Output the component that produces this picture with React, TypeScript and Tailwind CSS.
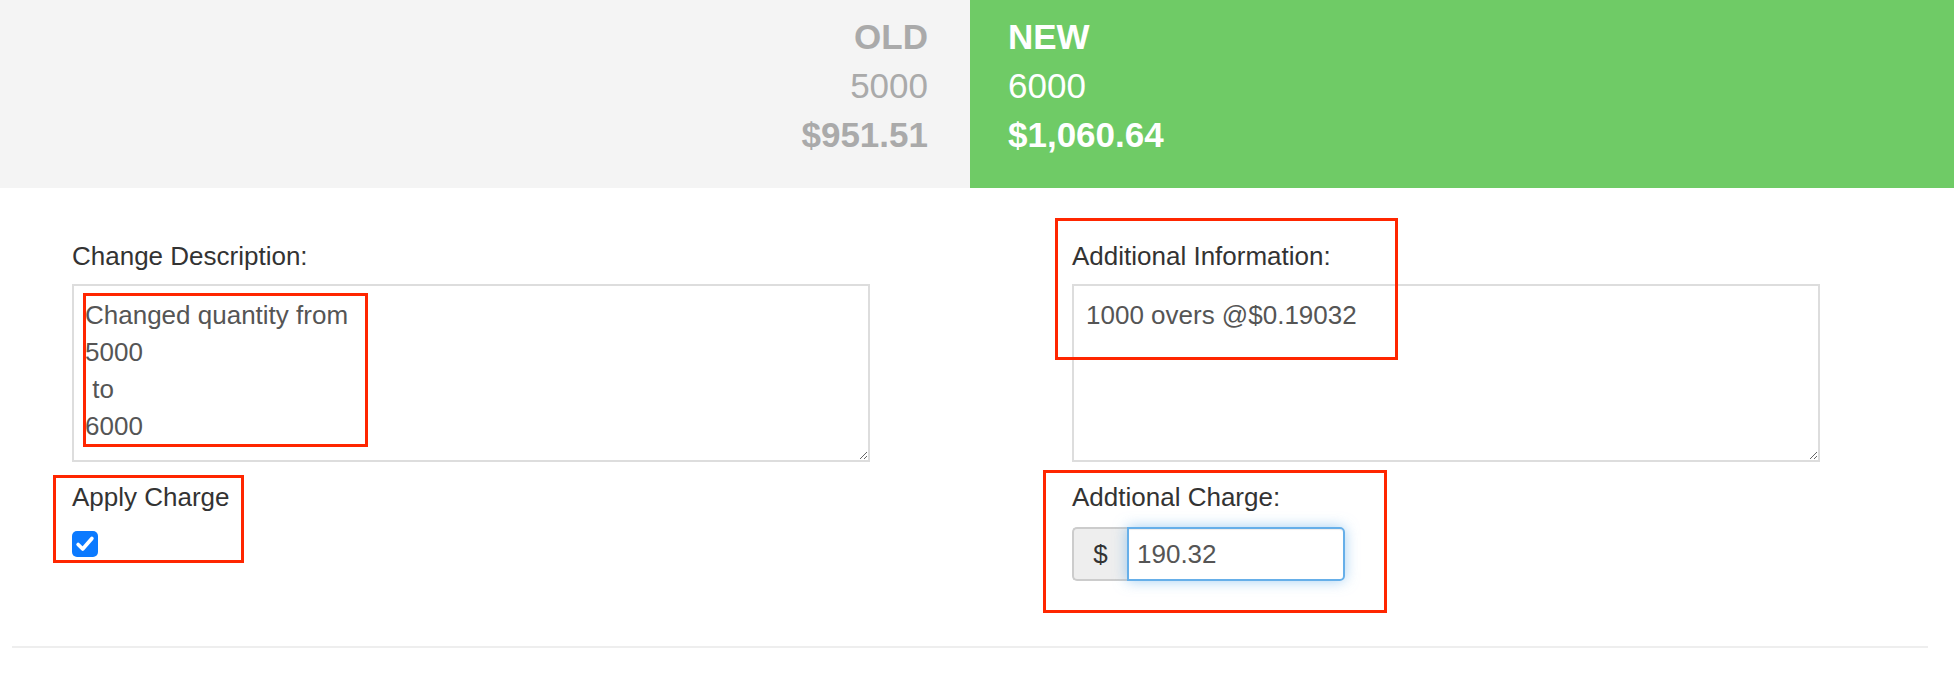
import type { ReactNode } from 'react'

function Label({ children, className = '' }: { children: ReactNode; className?: string }) {
  return <label className={`block text-[#333333] ${className}`}>{children}</label>
}

function CheckedBox() {
  return (
    <span className="mt-[15px] flex h-[26px] w-[26px] items-center justify-center rounded-[5px] bg-[#0b7aff]">
      <svg viewBox="0 0 24 24" className="h-[22px] w-[22px]" fill="none">
        <path
          d="M4.5 12.5l5 5L19.5 6"
          stroke="white"
          strokeWidth="4"
          strokeLinecap="round"
          strokeLinejoin="round"
        />
      </svg>
    </span>
  )
}

function RedBox({ className }: { className: string }) {
  return <div className={`pointer-events-none absolute border-[3px] border-[#ff2600] ${className}`} />
}

export default function App() {
  return (
    <div className="relative min-h-screen bg-white font-['Liberation_Sans',Arial,sans-serif]">
      {/* old / new summary */}
      <div className="flex h-[188px]">
        <div className="w-[970px] bg-[#f4f4f4] pr-[42px] pt-[12px] text-right text-[35px] leading-[49px] text-[#aaaaaa]">
          <div className="font-bold">OLD</div>
          <div>5000</div>
          <div className="font-bold">$951.51</div>
        </div>
        <div className="flex-1 bg-[#6fcb66] pl-[38px] pt-[12px] text-[35px] leading-[49px] text-white">
          <div className="font-bold">NEW</div>
          <div>6000</div>
          <div className="font-bold">$1,060.64</div>
        </div>
      </div>

      <div className="flex items-start gap-[202px] pl-[72px] pt-[50px] text-[26px] leading-[37px]">
        <div className="flex w-[798px] flex-col">
          <Label>Change Description:</Label>
          <textarea
            className="mt-[9px] h-[178px] w-full border-2 border-[#dddddd] px-[11px] py-[11px] text-[#555555] outline-none"
            defaultValue={'Changed quantity from\n5000\n to\n6000'}
          />
          <Label className="mt-[17px]">Apply Charge</Label>
          <CheckedBox />
        </div>

        <div className="flex w-[748px] flex-col">
          <Label>Additional Information:</Label>
          <textarea
            className="mt-[9px] h-[178px] w-full border-2 border-[#dddddd] px-[12px] py-[11px] text-[#555555] outline-none"
            defaultValue="1000 overs @$0.19032"
          />
          <Label className="mt-[17px]">Addtional Charge:</Label>
          <div className="mt-[11px] flex h-[54px]">
            <span className="flex w-[55px] shrink-0 items-center justify-center rounded-l-[5px] border-2 border-r-0 border-[#cccccc] bg-[#eeeeee] text-[#333333]">
              $
            </span>
            <input
              className="w-[218px] rounded-r-[5px] border-2 border-[#66afe9] px-[8px] text-[#555555] shadow-[inset_0_1px_1px_rgba(0,0,0,0.075),0_0_14px_rgba(102,175,233,0.6)] outline-none"
              defaultValue="190.32"
            />
          </div>
        </div>
      </div>

      <hr className="ml-[12px] mr-[26px] mt-[65px] border-t-2 border-[#eeeeee]" />

      {/* annotation boxes */}
      <RedBox className="left-[83px] top-[293px] h-[154px] w-[285px]" />
      <RedBox className="left-[53px] top-[475px] h-[88px] w-[191px]" />
      <RedBox className="left-[1055px] top-[218px] h-[142px] w-[343px]" />
      <RedBox className="left-[1043px] top-[470px] h-[143px] w-[344px]" />
    </div>
  )
}
